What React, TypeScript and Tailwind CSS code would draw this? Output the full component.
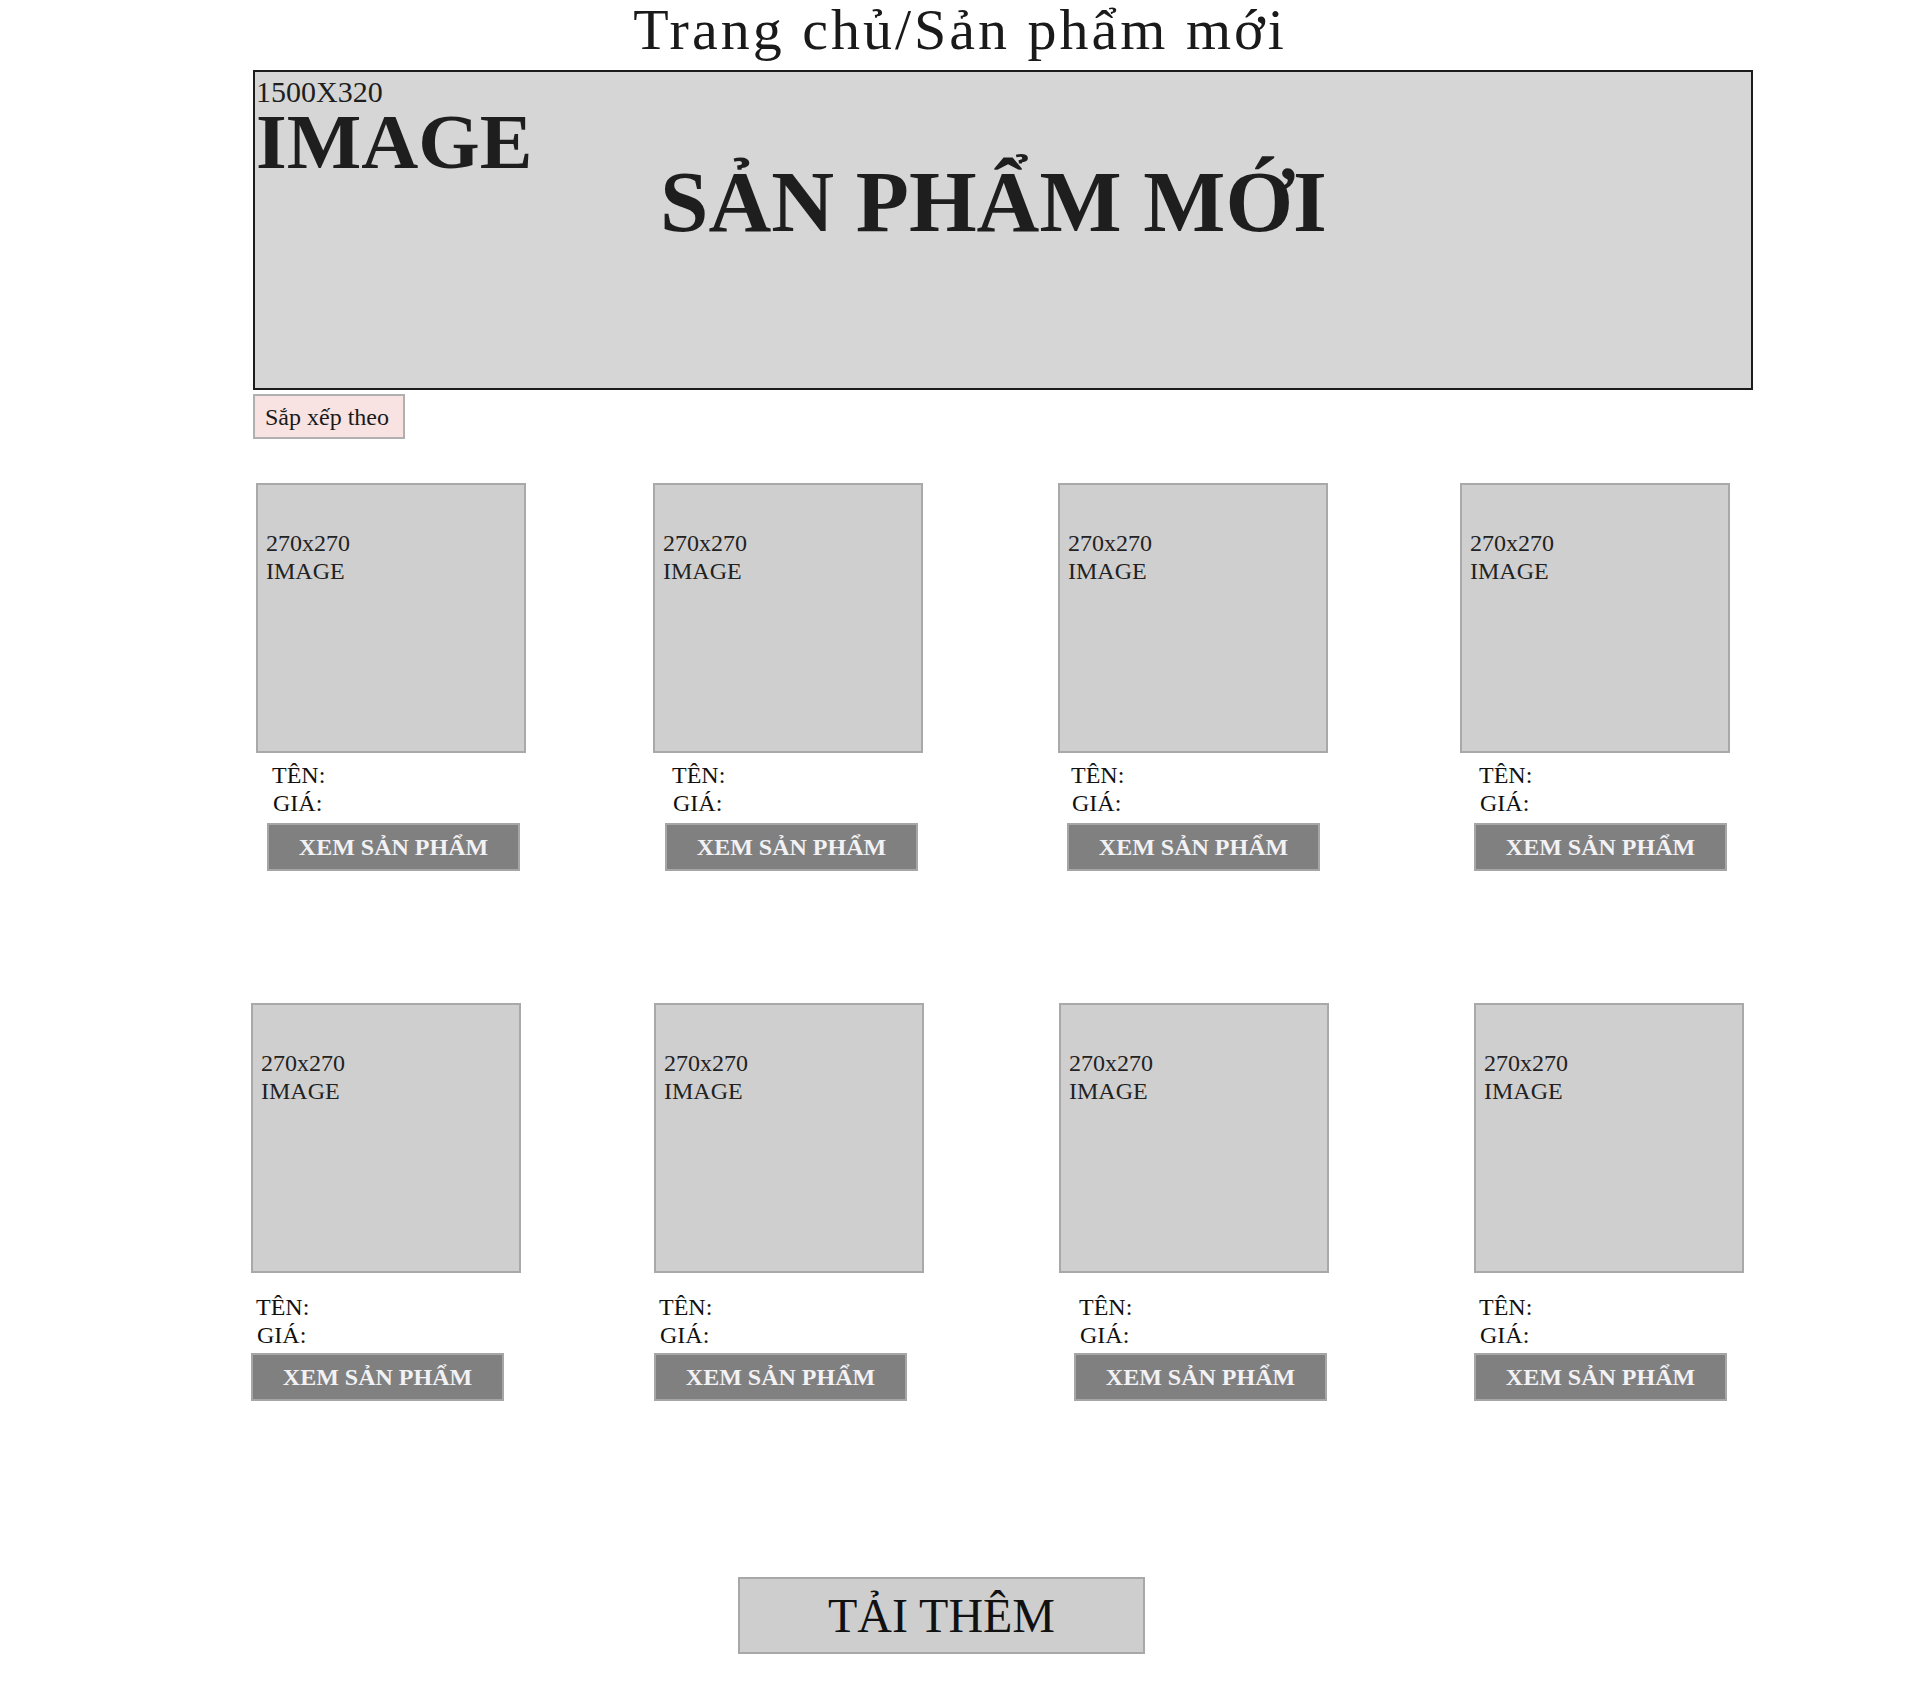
import React from "react";

type Card = {
  wrap: string;
  text: string;
  button: string;
};

// per-card offsets, the mockup is not on a strict grid
const rowOne: Card[] = [
  { wrap: "ml-[3px]", text: "mt-[8px] pl-[16px]", button: "mt-[6px] ml-[11px]" },
  { wrap: "ml-[127px]", text: "mt-[8px] pl-[19px]", button: "mt-[6px] ml-[12px]" },
  { wrap: "ml-[135px]", text: "mt-[8px] pl-[13px]", button: "mt-[6px] ml-[9px]" },
  { wrap: "ml-[132px]", text: "mt-[8px] pl-[19px]", button: "mt-[6px] ml-[14px]" },
];

const rowTwo: Card[] = [
  { wrap: "ml-[-2px]", text: "mt-[20px] pl-[5px]", button: "mt-[4px] ml-0" },
  { wrap: "ml-[133px]", text: "mt-[20px] pl-[5px]", button: "mt-[4px] ml-0" },
  { wrap: "ml-[135px]", text: "mt-[20px] pl-[20px]", button: "mt-[4px] ml-[15px]" },
  { wrap: "ml-[145px]", text: "mt-[20px] pl-[5px]", button: "mt-[4px] ml-0" },
];

function ProductCard({ card }: { card: Card }) {
  return (
    <div className={`flex w-[270px] shrink-0 flex-col ${card.wrap}`}>
      <div className="h-[270px] w-[270px] border-2 border-[#a9a9a9] bg-[#d0cfd0] pl-[8px] pt-[44px] text-[24px] leading-[28px] text-[#222]">
        <div>270x270</div>
        <div>IMAGE</div>
      </div>
      <div className={`text-[24px] leading-[28px] text-[#111] ${card.text}`}>
        <div>TÊN:</div>
        <div className="pl-[1px]">GIÁ:</div>
      </div>
      <button
        className={`flex h-[48px] w-[253px] items-center justify-center border-2 border-[#a6a6a6] bg-[#808080] text-[24px] font-bold text-[#f2f1f4] ${card.button}`}
      >
        XEM SẢN PHẨM
      </button>
    </div>
  );
}

export default function App() {
  return (
    <div className="min-h-[1700px] w-[1920px] bg-white font-['Liberation_Serif','Times_New_Roman',serif] text-[#1e1e1e]">
      {/* Breadcrumb */}
      <h1 className="h-[57px] pt-[3px] text-center text-[58px] leading-[54px] tracking-[3px] text-[#1a1a1a]">
        Trang chủ/Sản phẩm mới
      </h1>

      <div className="ml-[253px] mt-[13px] w-[1500px]">
        {/* Banner */}
        <div className="h-[320px] w-[1500px] border-2 border-[#1c1c1c] bg-[#d6d6d6] pl-[1px] pt-[5px]">
          <div className="text-[30px] leading-[30px]">1500X320</div>
          <div className="mt-[13px] text-[79px] font-bold leading-[44px]">IMAGE</div>
          <div className="mt-[-2px] pr-[20px] text-center text-[87px] font-bold leading-[80px]">
            SẢN PHẨM MỚI
          </div>
        </div>

        {/* Sort */}
        <button className="mt-[4px] flex h-[45px] w-[152px] items-center border-2 border-[#b0b0b0] bg-[#f8e2e2] pl-[10px] text-[24px] text-[#1a1a1a]">
          Sắp xếp theo
        </button>

        {/* Products */}
        <div className="mt-[44px] flex">
          {rowOne.map((c, i) => (
            <ProductCard key={i} card={c} />
          ))}
        </div>
        <div className="mt-[132px] flex">
          {rowTwo.map((c, i) => (
            <ProductCard key={i} card={c} />
          ))}
        </div>

        {/* Load more */}
        <button className="ml-[485px] mt-[176px] flex h-[77px] w-[407px] items-center justify-center border-2 border-[#a8a8a8] bg-[#cfcecf] text-[48px] text-[#111]">
          TẢI THÊM
        </button>
      </div>
    </div>
  );
}
